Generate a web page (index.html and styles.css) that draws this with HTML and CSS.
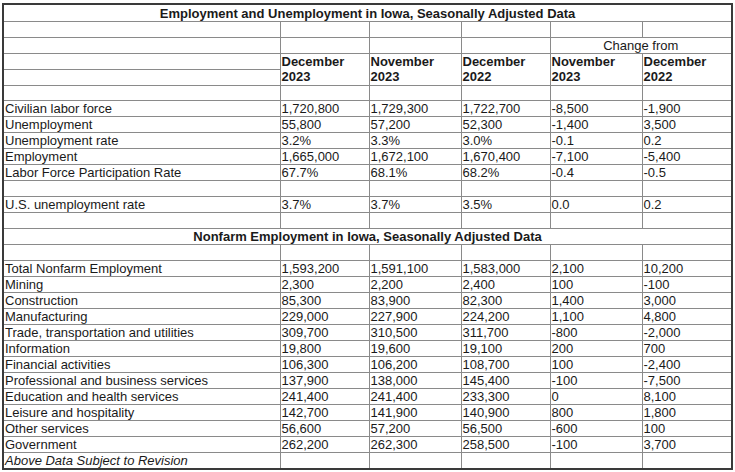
FILE: index.html
```html
<!DOCTYPE html>
<html>
<head>
<meta charset="utf-8">
<link rel="stylesheet" href="styles.css">
</head>
<body>
<table class="data">
<colgroup>
<col class="c-label"><col class="c2"><col class="c3"><col class="c4"><col class="c5"><col class="c6">
</colgroup>
<tbody>
<tr class="title"><td colspan="6">Employment and Unemployment in Iowa, Seasonally Adjusted Data</td></tr>
<tr><td></td><td></td><td></td><td></td><td></td><td></td></tr>
<tr><td></td><td></td><td></td><td></td><td colspan="2" class="center">Change from</td></tr>
<tr><td></td><td rowspan="2" class="hd">December<br>2023</td><td rowspan="2" class="hd">November<br>2023</td><td rowspan="2" class="hd">December<br>2022</td><td rowspan="2" class="hd">November<br>2023</td><td rowspan="2" class="hd">December<br>2022</td></tr>
<tr><td></td></tr>
<tr><td></td><td></td><td></td><td></td><td></td><td></td></tr>
<tr><td>Civilian labor force</td><td>1,720,800</td><td>1,729,300</td><td>1,722,700</td><td>-8,500</td><td>-1,900</td></tr>
<tr><td>Unemployment</td><td>55,800</td><td>57,200</td><td>52,300</td><td>-1,400</td><td>3,500</td></tr>
<tr><td>Unemployment rate</td><td>3.2%</td><td>3.3%</td><td>3.0%</td><td>-0.1</td><td>0.2</td></tr>
<tr><td>Employment</td><td>1,665,000</td><td>1,672,100</td><td>1,670,400</td><td>-7,100</td><td>-5,400</td></tr>
<tr><td>Labor Force Participation Rate</td><td>67.7%</td><td>68.1%</td><td>68.2%</td><td>-0.4</td><td>-0.5</td></tr>
<tr><td></td><td></td><td></td><td></td><td></td><td></td></tr>
<tr><td>U.S. unemployment rate</td><td>3.7%</td><td>3.7%</td><td>3.5%</td><td>0.0</td><td>0.2</td></tr>
<tr><td></td><td></td><td></td><td></td><td></td><td></td></tr>
<tr class="subtitle"><td colspan="6">Nonfarm Employment in Iowa, Seasonally Adjusted Data</td></tr>
<tr><td></td><td></td><td></td><td></td><td></td><td></td></tr>
<tr><td>Total Nonfarm Employment</td><td>1,593,200</td><td>1,591,100</td><td>1,583,000</td><td>2,100</td><td>10,200</td></tr>
<tr><td>Mining</td><td>2,300</td><td>2,200</td><td>2,400</td><td>100</td><td>-100</td></tr>
<tr><td>Construction</td><td>85,300</td><td>83,900</td><td>82,300</td><td>1,400</td><td>3,000</td></tr>
<tr><td>Manufacturing</td><td>229,000</td><td>227,900</td><td>224,200</td><td>1,100</td><td>4,800</td></tr>
<tr><td>Trade, transportation and utilities</td><td>309,700</td><td>310,500</td><td>311,700</td><td>-800</td><td>-2,000</td></tr>
<tr><td>Information</td><td>19,800</td><td>19,600</td><td>19,100</td><td>200</td><td>700</td></tr>
<tr><td>Financial activities</td><td>106,300</td><td>106,200</td><td>108,700</td><td>100</td><td>-2,400</td></tr>
<tr><td>Professional and business services</td><td>137,900</td><td>138,000</td><td>145,400</td><td>-100</td><td>-7,500</td></tr>
<tr><td>Education and health services</td><td>241,400</td><td>241,400</td><td>233,300</td><td>0</td><td>8,100</td></tr>
<tr><td>Leisure and hospitality</td><td>142,700</td><td>141,900</td><td>140,900</td><td>800</td><td>1,800</td></tr>
<tr><td>Other services</td><td>56,600</td><td>57,200</td><td>56,500</td><td>-600</td><td>100</td></tr>
<tr><td>Government</td><td>262,200</td><td>262,300</td><td>258,500</td><td>-100</td><td>3,700</td></tr>
<tr><td class="note">Above Data Subject to Revision</td><td></td><td></td><td></td><td></td><td></td></tr>
</tbody>
</table>
</body>
</html>
```
FILE: styles.css
```css
html, body {
  margin: 0;
  padding: 0;
  background: #ffffff;
}

body {
  padding: 3px 0 0 2px;
  font-family: "Liberation Sans", Arial, sans-serif;
  font-size: 13px;
  color: #1a1a1a;
}

.data {
  border-collapse: collapse;
  border: 2px solid #3a3a3a;
  width: 731px;
  table-layout: fixed;
}

.c-label { width: 277px; }
.c2 { width: 89px; }
.c3 { width: 92px; }
.c4 { width: 89px; }
.c5 { width: 92px; }
.c6 { width: 90px; }

.data td {
  border: 1px solid #8a8a8a;
  padding: 0 1px;
  height: 14.85px;
  line-height: 15px;
  white-space: nowrap;
  overflow: hidden;
  vertical-align: middle;
}

.data .title td {
  height: 16px;
  text-align: center;
  font-weight: bold;
}

.data .subtitle td {
  text-align: center;
  font-weight: bold;
}

.data td.center {
  text-align: center;
}

.data td.hd {
  font-weight: bold;
  vertical-align: middle;
}

.data td.note {
  font-style: italic;
}
```
